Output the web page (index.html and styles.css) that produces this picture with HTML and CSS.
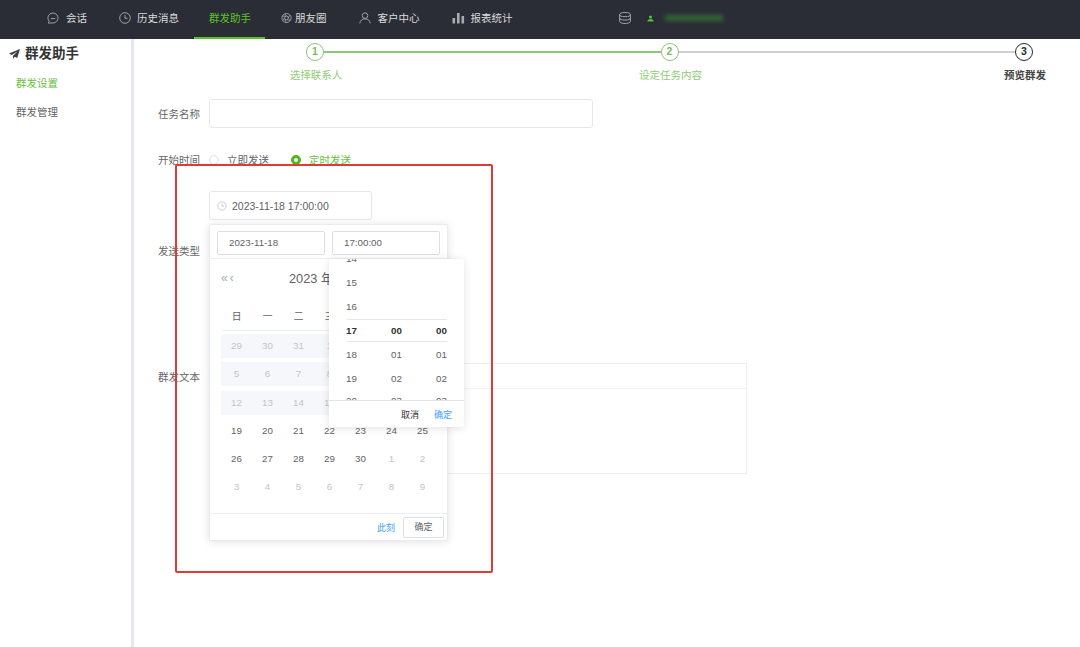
FILE: index.html
```html
<!DOCTYPE html>
<html>

<head>
	<meta charset="UTF-8">
	<title>群发助手</title>
	<link rel="stylesheet" href="styles.css">
</head>

<body>
	<header class="topbar">
		<nav class="nav">
			<a class="nav-item wide">
				<svg class="nav-icon" viewBox="0 0 12 12"><path d="M6 1a5 5 0 0 1 0 10H1.2l1-1.6A5 5 0 0 1 6 1z" /><path d="M3.800 6.600h4.400" /></svg>
				会话
			</a>
			<a class="nav-item">
				<svg class="nav-icon" viewBox="0 0 12 12"><circle cx="6" cy="6" r="5.300" /><path d="M6 2.800V6.300h2.600" /></svg>
				历史消息
			</a>
			<a class="nav-item active">群发助手</a>
			<a class="nav-item tight">
				<svg class="nav-icon" viewBox="0 0 12 12"><circle cx="6" cy="6" r="5" /><circle cx="6" cy="6" r="2" /><path d="M4.200 1.400 6 4M9.800 3 7.800 6M10.400 8.200H7M6 11l-1.700-3M2 9l1.900-3M1.400 4H5" /></svg>
				朋友圈
			</a>
			<a class="nav-item wide">
				<svg class="nav-icon" viewBox="0 0 12 12"><circle cx="6" cy="3.600" r="2.800" /><path d="M.8 11.400c.4-3 2.400-4.600 5.200-4.600s4.800 1.600 5.200 4.600" /></svg>
				客户中心
			</a>
			<a class="nav-item">
				<svg class="nav-icon bars" viewBox="0 0 12 12"><path d="M0 6h2.600v5.500H0zM4.500 1h2.600v10.500H4.500zM9 4h2.600v7.500H9z" /></svg>
				报表统计
			</a>
		</nav>
		<div class="tools">
			<svg class="db-icon" viewBox="0 0 12 12"><ellipse cx="6" cy="2.600" rx="5.400" ry="2.100" /><path d="M.6 2.600v6.800c0 1.200 2.400 2.100 5.400 2.100s5.400-.9 5.400-2.100V2.600M.6 6c0 1.200 2.400 2.100 5.400 2.100s5.400-.9 5.400-2.100" /></svg>
			<svg class="me-icon" viewBox="0 0 8 8"><circle cx="4" cy="2.300" r="1.800" /><path d="M.4 7.500c0-2 1.400-3 3.600-3s3.600 1 3.600 3z" /></svg>
			<span class="blurred-name"></span>
		</div>
	</header>

	<div class="layout">
		<aside class="sidebar">
			<h1 class="side-title">
				<svg class="send-icon" viewBox="0 0 12 11"><path d="M12 0 0 5l3 1.600L9.500 2.500 4.400 7.400v3.400l2-2.300 2.600 1.400z" /></svg>
				群发助手
			</h1>
			<ul class="side-menu">
				<li class="current">群发设置</li>
				<li>群发管理</li>
			</ul>
		</aside>

		<main class="main">
			<section class="steps">
				<span class="step-dot done">1</span>
				<span class="step-line done"></span>
				<span class="step-dot done">2</span>
				<span class="step-line"></span>
				<span class="step-dot">3</span>
				<span class="step-label done">选择联系人</span>
				<span class="step-label done col3">设定任务内容</span>
				<span class="step-label col5">预览群发</span>
			</section>

			<form class="form">
				<div class="row row-name">
					<label class="row-label">任务名称</label>
					<div class="text-input"></div>
				</div>

				<div class="row row-start">
					<label class="row-label">开始时间</label>
					<span class="radio"></span>
					<span class="radio-text">立即发送</span>
					<span class="radio on"></span>
					<span class="radio-text on">定时发送</span>
				</div>

				<div class="date-field">
					<div class="date-input">
						<svg class="clock-icon" viewBox="0 0 12 12"><circle cx="6" cy="6" r="5" /><path d="M6 3v3.300h2.400" /></svg>
						2023-11-18 17:00:00
					</div>

					<div class="picker">
						<div class="picker-head">
							<div class="picker-input">2023-11-18</div>
							<div class="picker-input">17:00:00</div>
						</div>
						<div class="cal">
							<div class="cal-head">
								<span class="cal-arrows">«‹</span>
								<span class="cal-title">2023 年</span>
							</div>
							<div class="cal-week">
								<span>日</span><span>一</span><span>二</span><span>三</span>
							</div>
							<div class="cal-days">
								<span class="off">29</span><span class="off">30</span><span class="off">31</span><span class="off">1</span><span class="off"></span><span class="off"></span><span class="off"></span>
								<span class="off">5</span><span class="off">6</span><span class="off">7</span><span class="off">8</span><span class="off"></span><span class="off"></span><span class="off"></span>
								<span class="off">12</span><span class="off">13</span><span class="off">14</span><span class="off">15</span><span class="off"></span><span class="off"></span><span class="off"></span>
								<span>19</span><span>20</span><span>21</span><span>22</span><span>23</span><span>24</span><span>25</span>
								<span>26</span><span>27</span><span>28</span><span>29</span><span>30</span><span class="next">1</span><span class="next">2</span>
								<span class="next">3</span><span class="next">4</span><span class="next">5</span><span class="next">6</span><span class="next">7</span><span class="next">8</span><span class="next">9</span>
							</div>
						</div>
						<div class="picker-foot">
							<a class="link">此刻</a>
							<a class="btn">确定</a>
						</div>

						<div class="time-panel">
							<div class="time-scroll">
								<div class="time-list">
									<span>14</span><span></span><span></span>
									<span>15</span><span></span><span></span>
									<span>16</span><span></span><span></span>
									<span class="sel">17</span><span class="sel">00</span><span class="sel">00</span>
									<span>18</span><span>01</span><span>01</span>
									<span>19</span><span>02</span><span>02</span>
									<span class="peek">20</span><span class="peek">03</span><span class="peek">03</span>
								</div>
							</div>
							<div class="time-mark"></div>
							<div class="time-foot">
								<a class="cancel">取消</a>
								<a class="link">确定</a>
							</div>
						</div>
					</div>
				</div>

				<div class="row row-type">
					<label class="row-label">发送类型</label>
				</div>

				<div class="row row-text">
					<label class="row-label">群发文本</label>
					<div class="editor">
						<div class="editor-bar"></div>
					</div>
				</div>
			</form>
		</main>
	</div>

	<div class="red-box"></div>
</body>

</html>
```

FILE: styles.css
```css
body,
h1 {
	margin: 0;
}

ul {
	margin: 0;
	padding: 0;
	list-style: none;
}

body {
	position: relative;
	width: 1080px;
	height: 647px;
	overflow: hidden;
	background-color: #fff;
	font-family: "Liberation Sans", "Noto Sans CJK SC", sans-serif;
	font-size: 10.5px;
	color: #606266;
}

/* top bar */
.topbar {
	display: flex;
	height: 39px;
	background-color: #2a2d35;
}

.nav {
	display: flex;
	gap: 2px;
	padding-left: 32px;
}

.nav-item {
	display: flex;
	align-items: center;
	gap: 6px;
	box-sizing: border-box;
	height: 39px;
	padding: 0 15px 2px;
	border-bottom: 2px solid transparent;
	color: #dcdcdc;
	white-space: nowrap;
}

.nav-item.wide {
	gap: 7px;
}

.nav-item.tight {
	gap: 3px;
}

.nav-item.active {
	width: 71px;
	margin: 0 -1px 0 -2px;
	color: #5cc22c;
	border-bottom-color: #5cc22c;
}

.nav-icon {
	width: 12px;
	height: 12px;
	fill: none;
	stroke: #a9abaf;
	stroke-width: .9;
}

.nav-item.tight .nav-icon {
	width: 11px;
}

.nav-icon.bars {
	width: 13px;
	fill: #a9abaf;
	stroke: none;
}

.tools {
	display: flex;
	align-items: center;
	margin-left: 91px;
	padding-bottom: 3px;
}

.db-icon {
	width: 12px;
	height: 12px;
	fill: none;
	stroke: #a9abaf;
	stroke-width: .9;
}

.me-icon {
	width: 7px;
	height: 7px;
	margin-left: 16px;
	fill: #4fc23a;
}

.blurred-name {
	width: 58px;
	height: 6px;
	margin-left: 11px;
	background-color: #356336;
	filter: blur(2px);
}

/* page */
.layout {
	display: flex;
	height: 608px;
}

.sidebar {
	flex: 0 0 131px;
	border-right: 3px solid #e6e4f6;
}

.side-title {
	display: flex;
	align-items: center;
	gap: 5px;
	padding: 7px 0 0 9px;
	font-size: 13.5px;
	line-height: 16px;
	color: #333;
}

.send-icon {
	width: 11px;
	height: 10px;
	fill: #3a3d44;
}

.side-menu {
	padding: 7px 0 0 16px;
	font-size: 10.5px;
	color: #666;
}

.side-menu li {
	height: 29px;
	line-height: 29px;
}

.side-menu .current {
	color: #69c23e;
}

.main {
	flex: 1;
}

/* steps */
.steps {
	display: grid;
	grid-template-columns: 62px 1fr 62px 1fr 62px;
	row-gap: 7px;
	align-items: center;
	justify-items: center;
	padding: 4px 25px 0 150px;
}

.step-dot {
	box-sizing: border-box;
	width: 18px;
	height: 18px;
	border: 1.5px solid #26292f;
	border-radius: 50%;
	font-size: 10.5px;
	font-weight: bold;
	line-height: 15px;
	text-align: center;
	color: #26292f;
}

.step-dot.done {
	border-color: #8cc678;
	color: #7cb966;
}

.step-line {
	justify-self: stretch;
	height: 2px;
	margin: 0 -22px;
	background-color: #cfcfcf;
}

.step-line.done {
	background-color: #8cc678;
}

.step-label {
	grid-row: 2;
	padding-left: 2px;
	line-height: 14px;
	white-space: nowrap;
	color: #444;
	font-weight: bold;
}

.step-label.done {
	color: #8ecb74;
	font-weight: normal;
}

.col3 {
	grid-column: 3;
}

.col5 {
	grid-column: 5;
}

/* form */
.form {
	padding: 17px 0 0 24px;
}

.row {
	display: flex;
	align-items: center;
}

.row-label {
	flex: 0 0 42px;
	margin-right: 9px;
	line-height: 14px;
	color: #666;
	white-space: nowrap;
}

.text-input {
	box-sizing: border-box;
	width: 384px;
	height: 29px;
	border: 1px solid #e4e7ed;
	border-radius: 3px;
}

.row-start {
	margin-top: 24px;
}

.radio {
	box-sizing: border-box;
	width: 10px;
	height: 10px;
	border: 1px solid #dcdfe6;
	border-radius: 50%;
}

.radio.on {
	margin-left: 22px;
	border: 3.5px solid #52b81a;
	background-color: #fff;
}

.radio-text {
	margin-left: 8px;
	color: #606266;
}

.radio-text.on {
	margin-left: 8px;
	color: #69c23e;
}

.date-field {
	position: relative;
	width: 163px;
	margin: 24px 0 0 51px;
}

.date-input {
	display: flex;
	align-items: center;
	gap: 5px;
	box-sizing: border-box;
	height: 29px;
	padding-left: 7px;
	border: 1px solid #e4e7ed;
	border-radius: 3px;
}

.clock-icon {
	width: 10px;
	height: 10px;
	fill: none;
	stroke: #c0c4cc;
	stroke-width: 1;
}

.row-type {
	margin-top: 24px;
}

.row-text {
	align-items: flex-start;
	margin-top: 105px;
}

.row-text .row-label {
	padding-top: 7px;
}

.editor {
	box-sizing: border-box;
	width: 538px;
	height: 111px;
	border: 1px solid #eeeeee;
}

.editor-bar {
	height: 24px;
	border-bottom: 1px solid #f2f2f2;
}

/* date picker popup */
.picker {
	position: absolute;
	left: 0;
	top: 33px;
	z-index: 2;
	box-sizing: border-box;
	width: 239px;
	height: 317px;
	background-color: #fff;
	border: 1px solid #e9ebef;
	border-radius: 2px;
	box-shadow: 0 1px 9px rgba(0, 0, 0, .12);
}

.picker-head {
	display: flex;
	gap: 7px;
	height: 34px;
	padding: 6px 7px 0;
	box-sizing: border-box;
	border-bottom: 1px solid #eeeff2;
}

.picker-input {
	box-sizing: border-box;
	width: 108px;
	height: 24px;
	padding-left: 11px;
	border: 1px solid #dcdfe6;
	border-radius: 2px;
	font-size: 9.75px;
	line-height: 22px;
}

.cal {
	height: 254px;
	padding: 0 10px 0 11px;
}

.cal-head {
	display: flex;
	height: 40px;
	align-items: center;
}

.cal-arrows {
	width: 68px;
	margin-top: -2px;
	font-size: 12px;
	letter-spacing: 2px;
	color: #a8abb2;
}

.cal-title {
	margin-top: -3px;
	font-size: 12.75px;
	color: #606266;
	white-space: nowrap;
}

.cal-week {
	display: grid;
	grid-template-columns: repeat(7, 31px);
	height: 32px;
	align-items: center;
	justify-items: center;
	box-sizing: border-box;
	padding-top: 3px;
	border-bottom: 1px solid #ebeef5;
	font-size: 9.75px;
}

.cal-days {
	display: grid;
	grid-template-columns: repeat(7, 31px);
	grid-auto-rows: 24px;
	row-gap: 4.3px;
	padding-top: 3px;
	font-size: 9.75px;
}

.cal-days span {
	line-height: 24px;
	text-align: center;
}

.cal-days .off {
	background-color: #f5f7fa;
	color: #c0c4cc;
}

.cal-days .next {
	color: #c0c4cc;
}

.picker-foot {
	display: flex;
	align-items: center;
	justify-content: flex-end;
	gap: 8px;
	box-sizing: border-box;
	height: 27px;
	padding-right: 3px;
	border-top: 1px solid #ebeef5;
	font-size: 9px;
}

.link {
	color: #409eff;
}

.btn {
	box-sizing: border-box;
	width: 41px;
	height: 21px;
	border: 1px solid #dcdfe6;
	border-radius: 2px;
	line-height: 19px;
	text-align: center;
	color: #606266;
}

/* time spinner, sits over the calendar */
.time-panel {
	position: absolute;
	left: 119px;
	top: 34px;
	width: 135px;
	height: 168px;
	background-color: #fff;
	border-radius: 2px;
	box-shadow: 0 1px 9px rgba(0, 0, 0, .12);
}

.time-scroll {
	height: 141px;
	overflow: hidden;
}

.time-list {
	display: grid;
	grid-template-columns: repeat(3, 45px);
	grid-auto-rows: 24px;
	margin-top: -12px;
	font-size: 9.75px;
	line-height: 24px;
	text-align: center;
}

.time-list .sel {
	font-weight: bold;
	color: #303133;
}

.time-list .peek {
	margin-top: -2px;
}

.time-mark {
	position: absolute;
	left: 18px;
	right: 17px;
	top: 60px;
	height: 23px;
	box-sizing: border-box;
	border-top: 1px solid #e4e7ed;
	border-bottom: 1px solid #e4e7ed;
}

.time-foot {
	display: flex;
	align-items: center;
	justify-content: flex-end;
	gap: 15px;
	box-sizing: border-box;
	height: 27px;
	padding-right: 12px;
	border-top: 1px solid #e4e4e4;
	font-size: 9px;
}

.cancel {
	color: #303133;
}

/* annotation drawn on the screenshot */
.red-box {
	position: absolute;
	left: 175px;
	top: 164px;
	z-index: 3;
	box-sizing: border-box;
	width: 318px;
	height: 409px;
	border: 2px solid #dc3c34;
	border-radius: 2px;
	pointer-events: none;
}
```
